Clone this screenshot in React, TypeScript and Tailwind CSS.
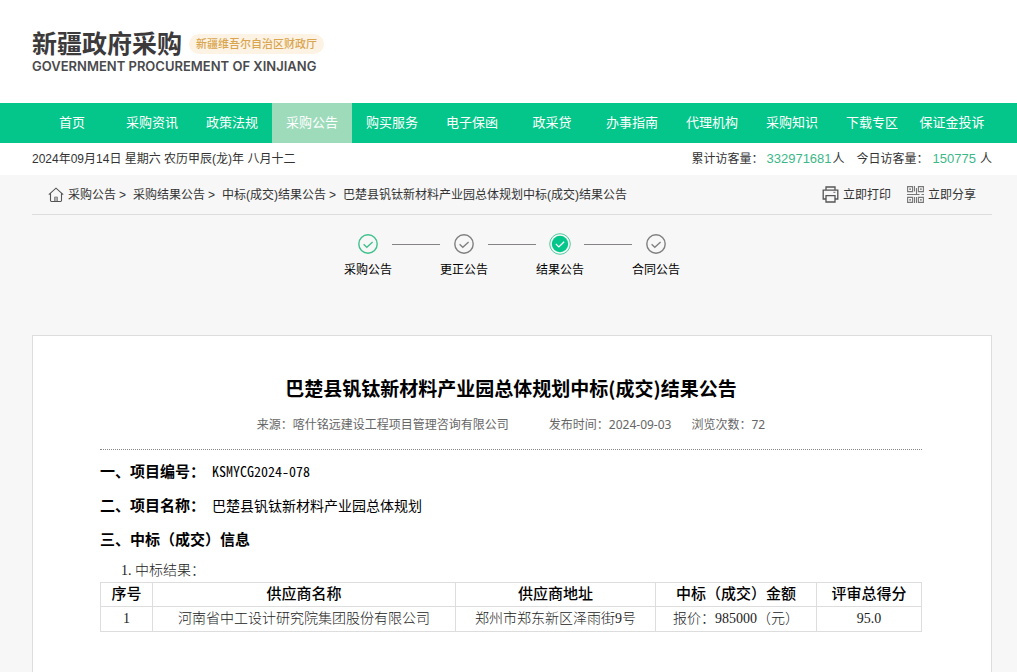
import React from 'react';

const navItems = [
  '首页', '采购资讯', '政策法规', '采购公告', '购买服务', '电子保函',
  '政采贷', '办事指南', '代理机构', '采购知识', '下载专区', '保证金投诉',
];

const crumbs = ['采购公告', '采购结果公告', '中标(成交)结果公告'];
const title = '巴楚县钒钛新材料产业园总体规划中标(成交)结果公告';

type StepState = 'done' | 'current' | 'idle';
const steps: { label: string; state: StepState }[] = [
  { label: '采购公告', state: 'done' },
  { label: '更正公告', state: 'idle' },
  { label: '结果公告', state: 'current' },
  { label: '合同公告', state: 'idle' },
];

function HomeIcon() {
  return (
    <svg width="16" height="16" viewBox="0 0 16 16" fill="none" stroke="#555" strokeWidth="1.1" aria-hidden="true">
      <path d="M0.8 7.6 8 1.2l7.2 6.4M2.5 6.4v7.2q0 .9.9.9h9.2q.9 0 .9-.9V6.4" />
      <path d="M6.5 14v-4h3v4" fill="#aaa" stroke="#888" strokeWidth="0.9" />
    </svg>
  );
}

function PrinterIcon() {
  return (
    <svg width="17" height="17" viewBox="0 0 17 17" fill="none" stroke="#555" strokeWidth="1.3" aria-hidden="true">
      <path d="M4 4V1h9v3M4 13H1.2V4.2h14.6V13H13" />
      <path d="M4 9.6h9V16H4z" />
      <path d="M11.4 6.4h2" stroke="#888" />
    </svg>
  );
}

function QrIcon() {
  return (
    <svg width="17" height="17" viewBox="0 0 17 17" fill="none" stroke="#777" strokeWidth="1.1" aria-hidden="true">
      <path d="M.6.6h5v5h-5zM11.4.6h5v5h-5zM.6 11.4h5v5h-5zM11.4 11.4h5v5h-5z" />
      <path d="M2.4 3.1h1.4M13.2 3.1h1.4M2.4 13.9h1.4M13.2 13.9h1.4" stroke="#444" strokeWidth="1.4" />
      <path d="M0 8.5h12.5M14.5 8.5H17M7.5 0v5.6M9.5 2v6M7.5 11v6M9.5 11v6" />
    </svg>
  );
}

function StepIcon({ state }: { state: StepState }) {
  if (state === 'current') {
    return (
      <svg width="22" height="22" viewBox="0 0 22 22" fill="none" aria-hidden="true">
        <circle cx="11" cy="11" r="10.3" stroke="#4ccf9f" strokeWidth="1" />
        <circle cx="11" cy="11" r="8.2" fill="#04c68a" />
        <path d="m6.8 10.9 3 3 5.4-5.2" stroke="#fff" strokeWidth="1.3" />
      </svg>
    );
  }
  const color = state === 'done' ? '#3fc08d' : '#807e80';
  return (
    <svg width="22" height="22" viewBox="0 0 22 22" fill="none" stroke={color} aria-hidden="true">
      <circle cx="11" cy="11" r="9.2" strokeWidth="1.4" />
      <path d="m6.6 11.2 3.2 3.1 5.8-5.4" strokeWidth="1.3" />
    </svg>
  );
}

export default function App() {
  return (
    <div className="min-h-screen bg-[#f7f7f7] font-['Liberation_Sans','Noto_Sans_CJK_SC',sans-serif] text-xs text-[#333]">
      <header className="bg-white">
        <div className="flex h-[103px] flex-col pt-6 pl-8">
          <div className="flex items-center gap-[7px]">
            <span className="font-['Noto_Sans_CJK_SC',sans-serif] text-[25px] leading-9 font-bold text-[#3c3a3b]">新疆政府采购</span>
            <span className="mt-1 rounded-full bg-[#fdf3e4] px-[7px] text-[11px] leading-5 font-medium text-[#d9a550]">新疆维吾尔自治区财政厅</span>
          </div>
          <span className="font-['Inter',sans-serif] text-[13px] leading-3 font-semibold text-[#4a4a4c]">GOVERNMENT PROCUREMENT OF XINJIANG</span>
        </div>
        <nav className="bg-[#04c68a] pr-[25px] pl-8">
          <ul className="grid grid-cols-12">
            {navItems.map((item) => (
              <li key={item}>
                <a
                  href="#"
                  className={
                    item === '采购公告'
                      ? 'block bg-[#9edbbb] text-center text-[13px] leading-10 whitespace-nowrap text-white'
                      : 'block text-center text-[13px] leading-10 whitespace-nowrap text-white'
                  }
                >
                  {item}
                </a>
              </li>
            ))}
          </ul>
        </nav>
        <div className="flex h-8 items-center justify-between pr-[25px] pl-8">
          <p>2024年09月14日 星期六 农历甲辰(龙)年 八月十二</p>
          <div className="flex gap-3">
            <p>累计访客量：<span className="mr-px ml-[3px] text-[13px] text-[#3cb888]">332971681</span>人</p>
            <p>今日访客量：<span className="mr-1 ml-1 text-[13px] text-[#3cb888]">150775</span>人</p>
          </div>
        </div>
      </header>

      <main className="pr-[25px] pl-8">
        <div className="flex h-10 items-center justify-between border-b border-[#dddddd] px-4">
          <div className="flex items-center">
            <HomeIcon />
            <nav className="ml-1 flex">
              {crumbs.map((crumb) => (
                <span key={crumb} className="flex">
                  <a href="#">{crumb}</a>
                  <span className="mr-[7px] ml-[3px]">&gt;</span>
                </span>
              ))}
              <span>{title}</span>
            </nav>
          </div>
          <div className="flex gap-4">
            <button type="button" className="flex items-center gap-1"><PrinterIcon />立即打印</button>
            <button type="button" className="flex items-center gap-1"><QrIcon />立即分享</button>
          </div>
        </div>

        <ol className="flex h-[120px] justify-center pt-[18px] text-black">
          {steps.map((step, i) => (
            <React.Fragment key={step.label}>
              {i > 0 && <li aria-hidden="true" className="mt-[11px] h-px w-12 bg-[#858385]" />}
              <li className="flex w-12 flex-col items-center gap-[7px]">
                <StepIcon state={step.state} />
                <span>{step.label}</span>
              </li>
            </React.Fragment>
          ))}
        </ol>

        <article className="min-h-[337px] border border-b-0 border-[#dddddd] bg-white pt-10 pr-[69px] pl-[67px] text-black">
          <h1 className="text-center font-['Noto_Sans_CJK_SC',sans-serif] text-[19px] leading-6 font-bold">{title}</h1>
          <div className="mt-[17px] flex h-[33px] justify-center border-b border-dotted border-[#888888] font-['Noto_Sans','Noto_Sans_CJK_SC',sans-serif] text-[#666]">
            <span className="mr-10">来源：喀什铭远建设工程项目管理咨询有限公司</span>
            <span className="mr-5">发布时间：2024-09-03</span>
            <span>浏览次数：72</span>
          </div>
          <div className="mt-1 font-['Noto_Sans_CJK_SC',sans-serif] text-sm leading-[34px]">
            <p><strong className="mr-[7px] text-[15px]">一、项目编号：</strong><span className="[font-feature-settings:'hwid']">KSMYCG2024-078</span></p>
            <p><strong className="mr-[7px] text-[15px]">二、项目名称：</strong>巴楚县钒钛新材料产业园总体规划</p>
            <h2 className="text-[15px] font-bold">三、中标（成交）信息</h2>
          </div>
          <div className="mt-[3px] font-['Liberation_Serif','Noto_Sans_CJK_SC',serif] text-sm leading-[23px] font-light text-[#222]">
            <p className="pl-[21px]">1. 中标结果：</p>
            <table className="w-full table-fixed border-collapse text-center whitespace-nowrap">
              <colgroup>
                <col className="w-[52px]" />
                <col className="w-[303px]" />
                <col className="w-[200px]" />
                <col className="w-[161px]" />
                <col />
              </colgroup>
              <thead>
                <tr className="text-[15px] text-black">
                  {['序号', '供应商名称', '供应商地址', '中标（成交）金额', '评审总得分'].map((head) => (
                    <th key={head} scope="col" className="border border-[#dddddd] p-0 font-medium">{head}</th>
                  ))}
                </tr>
              </thead>
              <tbody>
                <tr className="leading-6">
                  {['1', '河南省中工设计研究院集团股份有限公司', '郑州市郑东新区泽雨街9号', '报价：985000（元）', '95.0'].map((cell) => (
                    <td key={cell} className="border border-[#dddddd] p-0">{cell}</td>
                  ))}
                </tr>
              </tbody>
            </table>
          </div>
        </article>
      </main>
    </div>
  );
}
